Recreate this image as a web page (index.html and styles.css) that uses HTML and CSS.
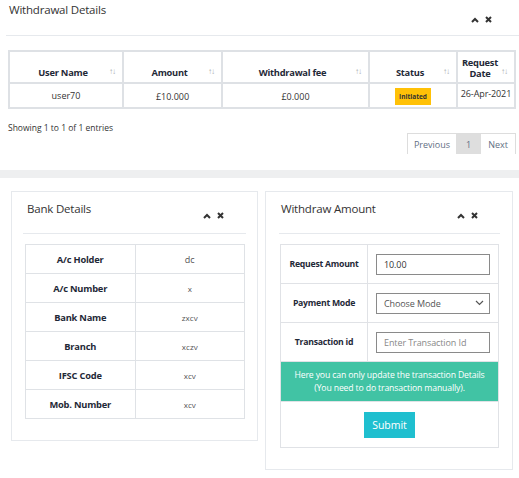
FILE: index.html
```html
<!DOCTYPE html>
<html lang="en">
<head>
    <meta charset="UTF-8">
    <meta name="viewport" content="width=device-width, initial-scale=1.0">
    <title>Withdrawal Details</title>
    <link rel="stylesheet" href="styles.css">
</head>
<body>
    <div class="top-panel">
        <div class="panel-title">
            <h2>Withdrawal Details</h2>
            <ul class="toolbox">
                <li>
                    <svg width="8" height="6" viewBox="0 0 8 6"><path d="M1 5 L4 2 L7 5" fill="none" stroke="#333" stroke-width="2"/></svg>
                </li>
                <li>
                    <svg width="7" height="7" viewBox="0 0 7 7"><path d="M1 1 L6 6 M6 1 L1 6" fill="none" stroke="#333" stroke-width="2"/></svg>
                </li>
            </ul>
        </div>

        <table class="data-table">
            <colgroup>
                <col style="width:114px">
                <col style="width:99px">
                <col style="width:147px">
                <col style="width:88px">
                <col style="width:58px">
            </colgroup>
            <thead>
                <tr>
                    <th>User Name<span class="sort">↑↓</span></th>
                    <th>Amount<span class="sort">↑↓</span></th>
                    <th>Withdrawal fee<span class="sort">↑↓</span></th>
                    <th>Status<span class="sort">↑↓</span></th>
                    <th class="date-head">Request Date<span class="sort">↑↓</span></th>
                </tr>
            </thead>
            <tbody>
                <tr>
                    <td class="user">user70</td>
                    <td>£10.000</td>
                    <td>£0.000</td>
                    <td><span class="badge">Initiated</span></td>
                    <td class="date">26-Apr-2021</td>
                </tr>
            </tbody>
        </table>

        <div class="table-footer">
            <div class="info">Showing 1 to 1 of 1 entries</div>
            <div class="pagination">
                <span class="page prev">Previous</span>
                <span class="page current">1</span>
                <span class="page next">Next</span>
            </div>
        </div>
    </div>

    <div class="band"></div>

    <div class="panels">
        <div class="panel">
            <div class="panel-title">
                <h2>Bank Details</h2>
                <ul class="toolbox">
                    <li>
                        <svg width="8" height="6" viewBox="0 0 8 6"><path d="M1 5 L4 2 L7 5" fill="none" stroke="#333" stroke-width="2"/></svg>
                    </li>
                    <li>
                        <svg width="7" height="7" viewBox="0 0 7 7"><path d="M1 1 L6 6 M6 1 L1 6" fill="none" stroke="#333" stroke-width="2"/></svg>
                    </li>
                </ul>
            </div>
            <table class="bank-table">
                <tr><th>A/c Holder</th><td class="big">dc</td></tr>
                <tr><th>A/c Number</th><td>x</td></tr>
                <tr><th>Bank Name</th><td>zxcv</td></tr>
                <tr><th>Branch</th><td>xczv</td></tr>
                <tr><th>IFSC Code</th><td>xcv</td></tr>
                <tr><th>Mob. Number</th><td>xcv</td></tr>
            </table>
        </div>

        <div class="panel withdraw">
            <div class="panel-title">
                <h2>Withdraw Amount</h2>
                <ul class="toolbox">
                    <li>
                        <svg width="8" height="6" viewBox="0 0 8 6"><path d="M1 5 L4 2 L7 5" fill="none" stroke="#333" stroke-width="2"/></svg>
                    </li>
                    <li>
                        <svg width="7" height="7" viewBox="0 0 7 7"><path d="M1 1 L6 6 M6 1 L1 6" fill="none" stroke="#333" stroke-width="2"/></svg>
                    </li>
                </ul>
            </div>
            <table class="form-table">
                <tr>
                    <th>Request Amount</th>
                    <td><input class="field" type="text" value="10.00"></td>
                </tr>
                <tr>
                    <th>Payment Mode</th>
                    <td>
                        <div class="field select">
                            <span>Choose Mode</span>
                            <svg width="9" height="6" viewBox="0 0 9 6"><path d="M1 1 L4.5 4.5 L8 1" fill="none" stroke="#555" stroke-width="1.2"/></svg>
                        </div>
                    </td>
                </tr>
                <tr>
                    <th>Transaction id</th>
                    <td><input class="field" type="text" placeholder="Enter Transaction Id"></td>
                </tr>
                <tr>
                    <td colspan="2" class="notice">Here you can only update the transaction Details<br>(You need to do transaction manually).</td>
                </tr>
                <tr>
                    <td colspan="2" class="actions"><button class="submit-btn">Submit</button></td>
                </tr>
            </table>
        </div>
    </div>
</body>
</html>
```

FILE: styles.css
```css
* {
    margin: 0;
    padding: 0;
    box-sizing: border-box;
    font-family: 'Open Sans', 'Noto Sans', sans-serif;
}

body {
    background: white;
    color: #333;
    width: 519px;
    overflow: hidden;
}

ul {
    list-style: none;
}

/* panel header */
.panel-title {
    display: flex;
    justify-content: space-between;
    border-bottom: 1px solid #e6e9ed;
}

.panel-title h2 {
    font-size: 11.5px;
    font-weight: 400;
    color: #333;
    letter-spacing: -0.2px;
}

.toolbox {
    display: flex;
    gap: 6px;
    align-items: center;
}

.toolbox li {
    display: flex;
}

/* top panel */
.top-panel {
    padding-left: 6px;
    height: 170px;
}

.top-panel .panel-title {
    height: 36px;
    padding: 2px 27px 0 3px;
}

.top-panel .toolbox {
    margin-top: 14px;
    align-self: flex-start;
}

.data-table {
    table-layout: fixed;
    width: 506px;
    margin: 14px 0 0 2px;
    border-collapse: collapse;
    border: 2px solid #dee1e5;
    font-size: 9px;
}

.data-table th,
.data-table td {
    border: 2px solid #dee1e5;
    text-align: center;
}

.data-table th {
    position: relative;
    height: 32px;
    vertical-align: bottom;
    padding: 0 10px 4px 4px;
    font-size: 9.3px;
    font-weight: 700;
    color: #1f2937;
    line-height: 11px;
    letter-spacing: -0.25px;
}

.data-table th.date-head {
    padding: 0 14px 3px 2px;
}

.sort {
    position: absolute;
    right: 7px;
    top: 13px;
    font-size: 8px;
    font-weight: 400;
    color: #a9adb2;
    letter-spacing: -1px;
}

.data-table td {
    height: 25px;
    color: #333;
    padding-top: 2px;
}

.data-table td.user {
    vertical-align: top;
    padding-top: 5px;
}

.data-table td.date {
    vertical-align: top;
    padding-top: 3px;
    font-size: 9px;
    letter-spacing: -0.1px;
}

.badge {
    display: inline-block;
    background: #ffc107;
    color: #333;
    font-size: 6.5px;
    font-weight: 700;
    width: 36px;
    height: 17px;
    line-height: 17px;
}

.table-footer {
    display: flex;
    justify-content: space-between;
    align-items: flex-start;
    margin-top: 11px;
}

.info {
    font-size: 8.5px;
    color: #333;
    padding: 2px 0 0 2px;
}

.pagination {
    display: flex;
    margin-top: 13px;
    margin-right: 3px;
    border: 1px solid #ddd;
    border-bottom: none;
    height: 21px;
}

.page {
    font-size: 9px;
    color: #5f6f85;
    line-height: 22px;
    text-align: center;
}

.page.prev {
    width: 48px;
}

.page.current {
    background: #dedede;
    width: 25px;
}

.page.next {
    width: 34px;
}

.band {
    height: 8px;
    background: #eeeff0;
}

/* bottom panels */
.panels {
    display: grid;
    grid-template-columns: 247px 248px;
    gap: 7px;
    padding: 13px 0 0 11px;
    align-items: start;
}

.panel {
    border: 1px solid #e6e9ed;
    padding: 0 11px 21px;
}

.panel .panel-title {
    height: 42px;
    padding: 9px 22px 0 4px;
}

.panel .toolbox {
    margin-top: 11px;
    align-self: flex-start;
}

.bank-table {
    width: 220px;
    margin: 10px 2px 0;
    border-collapse: collapse;
    border: 1px solid #dfe2e6;
}

.bank-table th,
.bank-table td {
    border: 1px solid #dfe2e6;
    height: 29px;
    text-align: center;
    width: 50%;
}

.bank-table th {
    font-size: 9.3px;
    font-weight: 700;
    color: #1f2937;
    letter-spacing: -0.2px;
}

.bank-table td {
    font-size: 8px;
    color: #555;
}

.bank-table td.big {
    font-size: 9px;
}

.withdraw {
    padding: 0 12px 21px 13px;
}

.withdraw .panel-title {
    padding-left: 2px;
}

.form-table {
    width: 219px;
    margin: 10px 0 0 1px;
    border-collapse: collapse;
    border: 1px solid #e0e2e6;
}

.form-table th,
.form-table td {
    border: 1px solid #e0e2e6;
    height: 39px;
}

.form-table th {
    width: 88px;
    font-size: 8.7px;
    font-weight: 700;
    color: #1f2937;
    text-align: center;
    letter-spacing: -0.25px;
}

.form-table td {
    padding: 0 8px 0 8px;
}

.field {
    display: block;
    width: 114px;
    height: 21px;
    border: 1px solid #8a8a8a;
    padding: 0 7px;
    font-size: 9px;
    color: #333;
    outline: none;
    letter-spacing: -0.1px;
}

.field::placeholder {
    color: #888;
}

.select {
    display: flex;
    align-items: center;
    justify-content: space-between;
    padding-right: 5px;
    color: #555;
}

.form-table td.notice {
    height: 40px;
    padding: 0;
    background: #41c3a4;
    color: white;
    font-size: 8.7px;
    text-align: center;
    line-height: 13px;
    letter-spacing: -0.15px;
}

.form-table td.actions {
    height: 46px;
    text-align: center;
    padding: 0;
}

.submit-btn {
    background: #1fbfcf;
    color: white;
    border: none;
    width: 51px;
    height: 26px;
    font-size: 10.5px;
    margin-top: 1px;
}
```
